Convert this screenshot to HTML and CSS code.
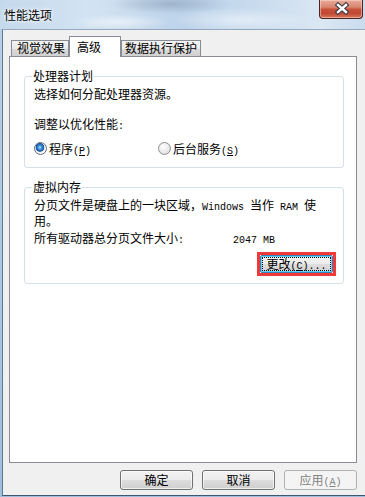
FILE: index.html
```html
<!DOCTYPE html>
<html lang="zh-CN">
<head>
<meta charset="utf-8">
<title>性能选项</title>
<link rel="stylesheet" href="styles.css">
</head>
<body>
<div class="window">
  <div class="titlebar">
    <span class="title">性能选项</span>
    <div class="close">
      <svg width="44" height="19" viewBox="0 0 44 19">
        <path d="M19 6 L27 13 M27 6 L19 13" stroke="#3a3a48" stroke-width="4.6" stroke-linecap="square" fill="none"/>
        <path d="M19 6 L27 13 M27 6 L19 13" stroke="#ffffff" stroke-width="2.4" stroke-linecap="square" fill="none"/>
      </svg>
    </div>
  </div>
  <div class="client">
    <div class="tabs">
      <div class="tab tab1">视觉效果</div>
      <div class="tab tab2 sel">高级</div>
      <div class="tab tab3">数据执行保护</div>
    </div>
    <div class="panel">
      <fieldset class="group g1">
        <legend>处理器计划</legend>
        <p class="line l1">选择如何分配处理器资源。</p>
        <p class="line l2">调整以优化性能<span class="lat">:</span></p>
        <div class="radios">
          <label class="opt opt1"><span class="radio on"></span><span>程序<span class="lat">(<u>P</u>)</span></span></label>
          <label class="opt"><span class="radio"></span><span>后台服务<span class="lat">(<u>S</u>)</span></span></label>
        </div>
      </fieldset>
      <fieldset class="group g2">
        <legend>虚拟内存</legend>
        <p class="desc">分页文件是硬盘上的一块区域，<span class="lat">Windows </span>当作<span class="lat"> RAM </span>使<br>用。</p>
        <p class="line size"><span class="sizelabel">所有驱动器总分页文件大小<span class="lat">:</span></span><span class="lat">2047 MB</span></p>
        <div class="changerow">
          <div class="highlight">
            <button class="change" type="button"><span class="focus">更改<span class="lat">(<u>C</u>)...</span></span></button>
          </div>
        </div>
      </fieldset>
    </div>
    <div class="actions">
      <button class="btn" type="button">确定</button>
      <button class="btn" type="button">取消</button>
      <button class="btn disabled" type="button">应用<span class="lat">(<u>A</u>)</span></button>
    </div>
  </div>
</div>
</body>
</html>
```

FILE: styles.css
```css
* { box-sizing: border-box; }

html, body {
  margin: 0;
  padding: 0;
}

body {
  width: 365px;
  height: 497px;
  overflow: hidden;
  font-family: "Noto Sans CJK SC", "Noto Sans", sans-serif;
  font-size: 12px;
  color: #000;
}

.lat {
  font-family: "Liberation Mono", monospace;
  font-size: 10px;
}

.window {
  width: 365px;
  height: 497px;
  display: flex;
  flex-direction: column;
  background: linear-gradient(#b9d1e8, #9fbedd);
}

.titlebar {
  height: 29px;
  flex: none;
  display: flex;
  justify-content: space-between;
  align-items: flex-start;
  background:
    radial-gradient(ellipse 60px 10px at 170px 4px, rgba(120,140,165,0.45), rgba(120,140,165,0) 100%),
    radial-gradient(ellipse 50px 8px at 120px 22px, rgba(255,255,255,0.55), rgba(255,255,255,0) 100%),
    radial-gradient(ellipse 70px 12px at 240px 20px, rgba(255,255,255,0.5), rgba(255,255,255,0) 100%),
    linear-gradient(to right, #c4d9ed, #d3e3f2 25%, #bcd3ea 50%, #c8dbee 70%, #dbe7f3 88%, #c9dcee);
}

.title {
  margin: 8px 0 0 4px;
  line-height: 14px;
  text-shadow: 0 0 5px #fff, 0 0 3px #fff;
}

.close {
  width: 44px;
  height: 19px;
  margin-right: 2px;
  border: 1px solid #4a2420;
  border-top: none;
  border-radius: 0 0 4px 4px;
  background: linear-gradient(#e9ab9b, #d98570 40%, #c7503a 52%, #c24a34 75%, #d77a5c);
  box-shadow: inset 0 0 0 1px rgba(255,220,210,0.5);
}

.close svg {
  display: block;
  margin: -1px 0 0 -1px;
}

.client {
  flex: 1;
  margin: 0 0 1px 2px;
  border-left: 1px solid #5f7891;
  border-top: 1px solid #95a8bc;
  border-bottom: 1px solid #3f5770;
  background: #f0f0f0;
  padding: 6px 0 0 6px;
}

.tabs {
  display: flex;
  align-items: flex-end;
  height: 21px;
  margin: 0 0 -1px 2px;
  position: relative;
  z-index: 1;
}

.tab {
  height: 16px;
  margin-bottom: 1px;
  border: 1px solid #898c95;
  border-bottom: none;
  background: linear-gradient(#f3f3f3, #ebebeb 50%, #dcdcdc 50%, #d0d0d0);
  line-height: 14px;
  white-space: nowrap;
}

.tab1 { width: 58px; padding-left: 5px; }
.tab3 { width: 80px; padding-left: 3px; }

.tab.sel {
  width: 52px;
  height: 21px;
  margin-bottom: 0;
  padding: 3px 0 0 7px;
  background: #fff;
}

.panel {
  width: 348px;
  height: 407px;
  background: #fff;
  border: 1px solid #898c95;
  padding: 12px 0 0 14px;
}

.group {
  width: 320px;
  margin: 0;
  border: 1px solid #d5dfe5;
  border-radius: 3px;
  padding: 0 10px 0 9px;
  min-width: 0;
}

.group legend {
  padding: 0 1px;
  margin-left: -2px;
  line-height: 14px;
}

.line {
  margin: 0;
  line-height: 14px;
  white-space: nowrap;
}

.g1 { padding-bottom: 12px; }
.l1 { margin-top: 4px; }
.l2 { margin-top: 16px; }

.radios {
  display: flex;
  align-items: center;
  height: 14px;
  margin-top: 7px;
}

.opt {
  display: flex;
  align-items: center;
  gap: 2px;
  white-space: nowrap;
}

.opt1 { width: 124px; }

.radio {
  width: 13px;
  height: 13px;
  border-radius: 50%;
  border: 1px solid #8f9091;
  background: radial-gradient(circle at 40% 35%, #ffffff 0, #f2f2f2 35%, #d4d4d4 100%);
  flex: none;
}

.radio.on {
  border-color: #5d6d7e;
  background: radial-gradient(circle at 45% 40%, #bfe6ff 0, #4aa3e8 1.5px, #1d62b3 3.5px, #1a4f8e 4px, #e6e6e6 4.6px, #fafafa 6px);
}

.g2 {
  margin-top: 12px;
  padding-bottom: 7px;
}

.desc {
  margin: 4px 0 0;
  line-height: 13px;
  white-space: nowrap;
}

.size { margin-top: 4px; }

.sizelabel {
  display: inline-block;
  width: 199px;
}

.changerow {
  display: flex;
  justify-content: flex-end;
  margin-top: 4px;
  margin-right: -3px;
}

.highlight {
  border: 3px solid #f03a3a;
}

.change {
  display: flex;
  width: 73px;
  height: 18px;
  padding: 1px;
  border: 1px solid #3c7fb1;
  border-radius: 2px;
  background: linear-gradient(#f4f4f4, #ececec 50%, #dedede 50%, #d2d2d2);
  box-shadow: inset 0 0 0 1px #5fd3ff;
  font: inherit;
  color: #000;
}

.change .focus {
  flex: 1;
  border: 1px dotted #000;
  line-height: 12px;
  text-align: center;
  white-space: nowrap;
}

.actions {
  width: 348px;
  display: flex;
  justify-content: flex-end;
  gap: 9px;
  margin-top: 7px;
}

.btn {
  width: 73px;
  height: 20px;
  padding: 0;
  border: 1px solid #707070;
  border-radius: 3px;
  background: linear-gradient(#f2f2f2, #ebebeb 50%, #dddddd 50%, #cfcfcf);
  box-shadow: inset 0 0 0 1px rgba(255,255,255,0.7);
  font: inherit;
  color: #000;
  line-height: 18px;
  white-space: nowrap;
}

.btn.disabled {
  border-color: #adb2b5;
  background: #f4f4f4;
  box-shadow: none;
  color: #838383;
}
```
